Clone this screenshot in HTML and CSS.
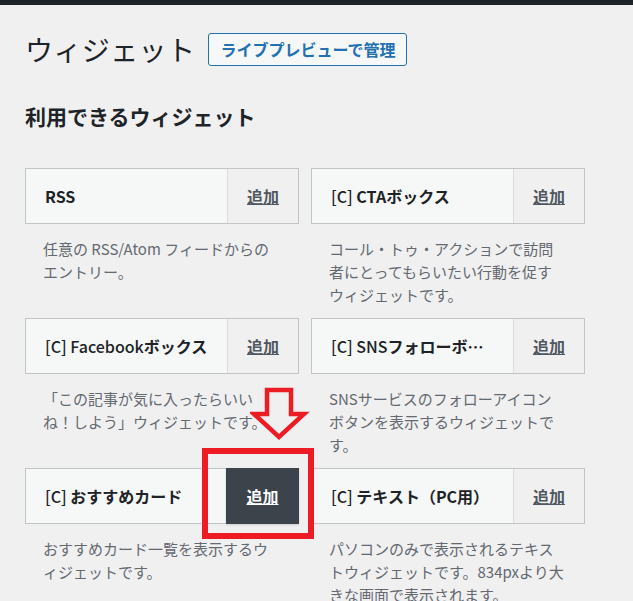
FILE: index.html
```html
<!DOCTYPE html>
<html lang="ja">
<head>
    <meta charset="UTF-8">
    <meta name="viewport" content="width=device-width, initial-scale=1.0">
    <title>ウィジェット</title>
    <link rel="stylesheet" href="styles.css">
</head>
<body>
    <div class="topbar"></div>
    <div class="wrap">
        <div class="page-head">
            <h1>ウィジェット</h1>
            <a href="#" class="head-btn">ライブプレビューで管理</a>
        </div>
        <h2>利用できるウィジェット</h2>

        <div class="widgets">
            <div class="widget">
                <div class="widget-top">
                    <span class="widget-title">RSS</span>
                    <a href="#" class="add">追加</a>
                </div>
                <p class="widget-desc">任意の RSS/Atom フィードからの<br>エントリー。</p>
            </div>
            <div class="widget">
                <div class="widget-top">
                    <span class="widget-title"><span class="tag">[C]</span> CTAボックス</span>
                    <a href="#" class="add">追加</a>
                </div>
                <p class="widget-desc">コール・トゥ・アクションで訪問<br>者にとってもらいたい行動を促す<br>ウィジェットです。</p>
            </div>
            <div class="widget">
                <div class="widget-top">
                    <span class="widget-title"><span class="tag">[C] Facebook</span>ボックス</span>
                    <a href="#" class="add">追加</a>
                </div>
                <p class="widget-desc">「この記事が気に入ったらいい<br>ね！しよう」ウィジェットです。</p>
            </div>
            <div class="widget">
                <div class="widget-top">
                    <span class="widget-title"><span class="tag">[C] SNS</span>フォローボタン</span>
                    <a href="#" class="add">追加</a>
                </div>
                <p class="widget-desc">SNSサービスのフォローアイコン<br>ボタンを表示するウィジェットで<br>す。</p>
            </div>
            <div class="widget">
                <div class="widget-top">
                    <span class="widget-title"><span class="tag">[C]</span> おすすめカード</span>
                    <a href="#" class="add add-active">追加</a>
                </div>
                <p class="widget-desc">おすすめカード一覧を表示するウ<br>ィジェットです。</p>
            </div>
            <div class="widget">
                <div class="widget-top">
                    <span class="widget-title"><span class="tag">[C]</span> テキスト（PC用）</span>
                    <a href="#" class="add">追加</a>
                </div>
                <p class="widget-desc">パソコンのみで表示されるテキス<br>トウィジェットです。834pxより大<br>きな画面で表示されます。</p>
            </div>

            <!-- annotation over the screenshot -->
            <div class="callout"></div>
            <svg class="arrow" width="60" height="60" viewBox="0 0 60 60">
                <polygon points="17,5 41,5 41,29 54,29 29,52 4,29 17,29" fill="none" stroke="#ed1c24" stroke-width="4.5"/>
            </svg>
        </div>
    </div>
</body>
</html>
```

FILE: styles.css
```css
body {
    margin: 0;
    background-color: #f0f0f1;
    font-family: "Noto Sans CJK JP", "Noto Sans", sans-serif;
    color: #1d2327;
}

.topbar {
    height: 5px;
    background-color: #1d2327;
}

.wrap {
    padding: 0 25px;
}

.page-head {
    display: flex;
    align-items: center;
    gap: 13px;
    margin-top: 27px;
}

h1 {
    margin: 0;
    font-size: 28px;
    font-weight: 400;
    line-height: 34px;
    letter-spacing: 0.4px;
}

.head-btn {
    border: 1px solid #2271b1;
    border-radius: 3px;
    background-color: #f6f7f7;
    color: #2271b1;
    font-size: 16px;
    font-weight: 700;
    line-height: 31px;
    padding: 0 11px;
    text-decoration: none;
}

h2 {
    margin: 35px 0 0;
    font-size: 21px;
    font-weight: 700;
    line-height: 30px;
}

.widgets {
    position: relative;
    display: grid;
    grid-template-columns: 274px 274px;
    gap: 12px;
    margin-top: 37px;
}

.widget-top {
    display: flex;
    height: 56px;
    box-sizing: border-box;
    border: 1px solid #c3c4c7;
    background-color: #f6f7f7;
}

.widget-title {
    flex: 1;
    min-width: 0;
    padding: 0 15px 0 19px;
    font-size: 16px;
    font-weight: 700;
    line-height: 54px;
    white-space: nowrap;
    overflow: hidden;
    text-overflow: ellipsis;
}

.tag {
    font-weight: 500;
}

.add {
    width: 71px;
    box-sizing: border-box;
    border-left: 1px solid #dcdcde;
    background-color: #f0f0f1;
    color: #50575e;
    font-size: 16px;
    font-weight: 700;
    line-height: 54px;
    text-align: center;
}

.add-active {
    width: 73px;
    margin: -1px -1px -1px 0;
    border-left: none;
    background-color: #3c434a;
    color: white;
    line-height: 56px;
    box-shadow: 0 1px 2px rgba(0,0,0,0.15);
}

.widget-desc {
    margin: 13px 0 0;
    padding: 0 18px;
    font-size: 15px;
    line-height: 23px;
    color: #646970;
    white-space: nowrap;
}

.callout {
    position: absolute;
    left: 177px;
    top: 280px;
    width: 112px;
    height: 91px;
    box-sizing: border-box;
    border: 6px solid #ed1c24;
}

.arrow {
    position: absolute;
    left: 225px;
    top: 217px;
}
```
